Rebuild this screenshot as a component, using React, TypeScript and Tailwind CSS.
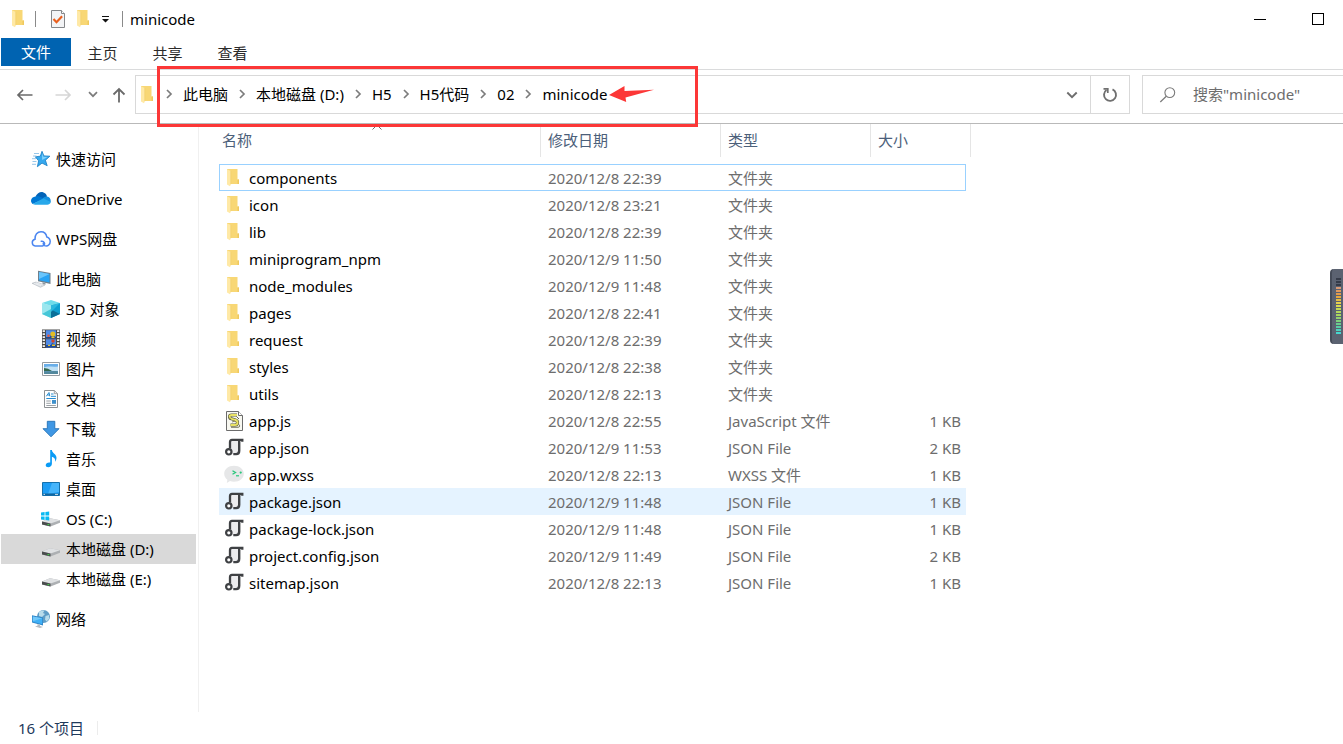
import type { ReactNode } from 'react';

function Icon({ children }: { children: ReactNode }) {
  return (
    <svg viewBox="0 0 20 20" className="h-5 w-5 shrink-0" aria-hidden="true">
      {children}
    </svg>
  );
}

function FolderIcon() {
  return (
    <Icon>
      <path d="M3 1h10.500v10.500H15V16H3z" fill="#f8d775" />
      <path d="M13.500 11.500H15V16h-1.500z" fill="#efc95f" />
      <path d="M3 1.200 6.800 3v13.200L6 18.200 3 16.600z" fill="#ffe9a6" />
      <path d="M6.800 3v13.200" stroke="#ecc965" strokeWidth=".6" />
    </Icon>
  );
}

function CheckDocIcon() {
  return (
    <Icon>
      <path d="M3.500 1.500h10l3 3v14h-13z" fill="#f3f4f6" stroke="#85878a" />
      <path d="M13.500 1.500v3h3" fill="#fff" stroke="#85878a" />
      <path d="m5.500 10 3 3.200 5.600-6" fill="none" stroke="#e9601f" strokeWidth="2.200" />
    </Icon>
  );
}

function StarIcon() {
  return (
    <Icon>
      <path d="M11 2.300l1.900 4.600 6 .3-4.500 4 1.800 5.500-5.200-2.600-4.600 3.600 1.200-5.900-3.300-4 5-.6z" fill="#35a8ee" stroke="#147bc2" strokeWidth=".8" />
      <path d="M11 4l1.300 3.700 4.400.3-5.600 3z" fill="#7dd0fb" />
      <path d="M3 4.500h5M2 7h3.500M1 9.700h4M1.500 12.500h4M1 15.300h4" stroke="#8bbfe6" strokeWidth=".9" />
    </Icon>
  );
}

function OneDriveIcon() {
  return (
    <Icon>
      <path d="M4.500 7.500C6 4.500 9.200 2.300 12 3.200c2.200.6 3.600 2.300 4 4.300L11 11z" fill="#0364b8" />
      <path d="M4.600 7.500C2 7.700 0 9.500 0 11.700c0 1.300.7 2.500 1.800 3.300L13.500 9.800 9 7.800C7.600 7.200 6 7.200 4.600 7.500z" fill="#0078d4" />
      <path d="M16 7.500c-1.800-.2-3.300.7-4.300 2L15 12l4.700 1.200c.5-2.700-1-5.400-3.700-5.700z" fill="#1490df" />
      <path d="M1.800 15c.7.500 1.600.7 2.500.7h12c1.600 0 3-1 3.500-2.500L12.500 9.300z" fill="#28a8ea" />
    </Icon>
  );
}

function WpsCloudIcon() {
  return (
    <Icon>
      <path
        d="M11.500 17H4.200A3.400 3.400 0 0 1 4 10.300C3.600 5.800 6.500 2.700 10 2.700c3.200 0 5.300 2.200 5.800 5.300 2 .6 3.400 2.300 3.400 4.500 0 2.600-2 4.500-4 4.500-2.800 0-3.500-2.200-2.500-3.700M11.500 17c1.700-.3 2.600-2 1.800-3.400-.6-1-1.700-1.600-3-1.300"
        fill="none"
        stroke="#4b86f0"
        strokeWidth="1.500"
        strokeLinecap="round"
      />
    </Icon>
  );
}

function ComputerIcon() {
  return (
    <Icon>
      <path d="M7 1.800 19.500 4v11L7 12.200z" fill="#6f7f8c" />
      <path d="M8 3l10.500 1.900v8.600L8 11.200z" fill="#29a3f4" />
      <path d="M8 3l10.500 1.900L8 10z" fill="#6ac5fb" />
      <path d="m11.500 13.200 3 .7v1.800l-3-.6z" fill="#8d98a1" />
      <path d="M1 14.300 5 13l9 3-4.500 2.300z" fill="#d7dce1" stroke="#a5adb5" strokeWidth=".5" />
      <path d="m3 14.400 7 2.400M5 13.800l7 2.200" stroke="#fff" strokeWidth=".5" />
    </Icon>
  );
}

function CubeIcon() {
  return (
    <Icon>
      <path d="M1 4l9-3 9 3-9 3z" fill="#6fdcea" />
      <path d="M1 4l9 2.500V19l-9-4z" fill="#9be7ef" />
      <path d="M1 15l9-5v9z" fill="#45c6d7" />
      <path d="M10 6.500 19 4v11l-9 4z" fill="#0e9fd0" />
      <path d="M10 10.500 19 15l-9 4z" fill="#0a6f98" />
      <path d="M10 6.500 19 4 10 13z" fill="#2bb7dd" />
    </Icon>
  );
}

function VideoIcon() {
  return (
    <Icon>
      <path d="M1 .5h18V19H1z" fill="#4b4b4b" />
      <path d="M5 1.300h10v7.900H5zM5 10.200h10v8.200H5z" fill="#4f8ae6" />
      <path d="M5 8h4l1-3 5 3v1.200H5zM5 16h5l1-2 4 2v2.400H5z" fill="#1e4899" />
      <circle cx="11.800" cy="5" r="2.500" fill="#e3bd23" />
      <circle cx="7.500" cy="6.700" r="1.300" fill="#e1593c" />
      <circle cx="12" cy="12" r="1.700" fill="#d0462f" />
      <path d="M10.500 7.500h3v1.400h-3zM7 15.800h2v1.300H7zM11 15.400h3v1.600h-3z" fill="#e8c32d" />
      <path d="M2.800 1.200v18M17.200 1.200v18" stroke="#f2f2f2" strokeWidth="2.300" strokeDasharray="1.700 1.300" />
    </Icon>
  );
}

function PictureIcon() {
  return (
    <Icon>
      <path d="M1.500 3.500h17v13h-17z" fill="#fff" stroke="#969ba0" />
      <path d="M3 5h14v10H3z" fill="#69aee9" />
      <path d="M3 8.500c4-2 8 0 14-1V12H3z" fill="#bfe0f5" />
      <path d="M3 9l4 .8 4 2.200H3z" fill="#35684f" />
      <path d="M3 12c4 .8 9-.8 14 .3V15H3z" fill="#53889d" />
    </Icon>
  );
}

function DocumentIcon() {
  return (
    <Icon>
      <path d="M3.500 1.500h10l3 3v14h-13z" fill="#fff" stroke="#8d9194" />
      <path d="M13.300 1.500v3.200h3.200" fill="#e8eaec" stroke="#8d9194" strokeWidth=".8" />
      <path d="M5.300 7.300 8 3.500l.8 3.800M6.500 6h2.200M10 5h2.500M10 7.300h5M5.300 9.500h9.500" fill="none" stroke="#258bd0" />
      <path d="M5.300 12h4.500M5.300 14.300h4.500M5.300 16.500h9.500" stroke="#9aa0a5" />
      <path d="M11 11h4v3.800h-4z" fill="#3f90cb" />
    </Icon>
  );
}

function DownloadIcon() {
  return (
    <Icon>
      <path d="M6.300 2.300h7.500v7.400H18L10 17.800 2 9.700h4.300z" fill="#3f97e4" stroke="#2472b6" strokeWidth=".9" />
    </Icon>
  );
}

function MusicIcon() {
  return (
    <Icon>
      <path d="M9.200 1h1.700c.2 3.300 4.600 4 4.600 7.800 0 1.700-.7 3-1.400 3.900.5-3-.7-4.300-3.200-5v7.100c0 2.200-1.800 3.500-3.700 3.500-1.500 0-2.500-.8-2.500-2 0-1.800 2.200-3.300 4.500-2.700z" fill="#0a9bf5" />
    </Icon>
  );
}

function DesktopIcon() {
  return (
    <Icon>
      <path d="M1.500 3.500h17v13h-17z" fill="#1e9df4" stroke="#1571ad" />
      <path d="M11 4h7v9L7 15z" fill="#47b5fb" />
      <path d="M2 14.500h16v1.700H2z" fill="#11649c" />
      <path d="M2.500 15.400h1.500M14 15.400h3" stroke="#fff" strokeWidth=".8" />
    </Icon>
  );
}

function DriveShape() {
  return (
    <>
      <path d="M1 12.500 9 9.300l10 2v2.400L9.500 17.500 1 15.500z" fill="#adb0b3" />
      <path d="M1 12.500 9 9.300l10 2-9.500 3.200z" fill="#dfe1e3" />
      <path d="m1 12.500 8.500 2v3L1 15.500z" fill="#4a4d4e" />
      <path d="M6.500 15h1.800v1.200H6.500z" fill="#44cf4d" />
    </>
  );
}

function DriveIcon() {
  return (
    <Icon>
      <DriveShape />
    </Icon>
  );
}

function SystemDriveIcon() {
  return (
    <Icon>
      <DriveShape />
      <path d="M0 3.500 3.600 3v3.600H0zM4.400 2.900 8.200 2.400v4.200H4.400zM0 7.400h3.600V11L0 10.500zM4.400 7.400h3.800v4.200l-3.800-.5z" fill="#08b9f2" />
    </Icon>
  );
}

function NetworkIcon() {
  return (
    <Icon>
      <circle cx="12.500" cy="7.500" r="6.500" fill="#5f9dc6" />
      <path d="M8 3c2-1.500 4-1.600 5.500-1.500L12 4l2 1-3 3-3-1zM14.500 7l3.500-1v4l-2.500 2.500-1.500-2z" fill="#b9dceb" />
      <path d="M1 6.300 12 8.500v8L1 13.500z" fill="#3086c8" />
      <path d="M1.800 7.400 11.200 9.300v6l-9.400-2.500z" fill="#3fb0f6" />
      <path d="m1.800 7.400 9.400 1.900-9.400 3z" fill="#73c9fa" />
      <path d="m6.500 15 2.500.7v1.400l3 .8-3 1-5-1.300 2.500-.8z" fill="#b6bdc3" />
    </Icon>
  );
}

function ScriptIcon() {
  return (
    <Icon>
      <path d="M2.500.5h12l4 4v15h-16z" fill="#f8f8f1" stroke="#6c6c6c" />
      <path d="M14.500.5v4h4" fill="#fff" stroke="#6c6c6c" />
      <path d="M13 4H7.500C5 4 5 7.300 7.500 7.800l4 1.200c3 .9 2.500 5-.5 5H6.500" fill="none" stroke="#57573a" strokeWidth="3.200" />
      <path d="M13 4H7.500C5 4 5 7.300 7.500 7.800l4 1.200c3 .9 2.500 5-.5 5H6.500" fill="none" stroke="#e9e265" strokeWidth="1.900" />
      <path d="M12.500 5.500 15 8M7 16.200h7.500c1.200 0 1.500-1.700.5-2.700" fill="none" stroke="#57573a" strokeWidth=".9" />
      <path d="M5 6.500 7 9M8 11l3-1" stroke="#57573a" strokeWidth=".7" />
    </Icon>
  );
}

function JsonIcon() {
  return (
    <Icon>
      <path d="M6.500 2h9v11.500c0 2-1 3-3 3H9L6.500 11z" fill="#ececee" />
      <path d="M18.300 3.800V1.800H8C6.500 1.800 6 2.700 6 4.200v6.300" fill="none" stroke="#3f4144" strokeWidth="2.300" />
      <path d="M15.200 2v10.800c0 2.300-1 3.300-3 3.300H9.300" fill="none" stroke="#3f4144" strokeWidth="2.400" />
      <circle cx="4.800" cy="13.800" r="2.700" fill="#fff" stroke="#3f4144" strokeWidth="2.200" />
    </Icon>
  );
}

function WxssIcon() {
  return (
    <Icon>
      <path d="M10 .8c5.500 0 9.800 3.500 9.800 8s-4.300 8-9.800 8c-1.500 0-2.800-.2-4-.7L2.800 18l.6-3.200C1.300 13.300.2 11.200.2 8.800.2 4.300 4.500.8 10 .8z" fill="#e6e7e8" />
      <path d="m8.500 5.800 3 1.700-3 1.700" fill="none" stroke="#2ac77b" strokeWidth="1.300" />
      <path d="M12 10.800h3" stroke="#2ac77b" strokeWidth="1.200" />
      <circle cx="16.700" cy="7.600" r="1.100" fill="#2ac77b" />
    </Icon>
  );
}

function Chevron() {
  return (
    <svg viewBox="0 0 8 10" className="h-[10px] w-2 shrink-0" aria-hidden="true">
      <path d="m2 1 4 4-4 4" fill="none" stroke="#7c7c7c" strokeWidth="1.700" />
    </svg>
  );
}

function DownChevron() {
  return (
    <svg viewBox="0 0 12 8" className="h-2 w-3" aria-hidden="true">
      <path d="m1.300 1.500 4.700 4.700 4.700-4.700" fill="none" stroke="#6e6e6e" strokeWidth="1.900" />
    </svg>
  );
}

type Place = { label: string; icon: ReactNode; active?: boolean };

const drives: Place[] = [
  { label: '3D 对象', icon: <CubeIcon /> },
  { label: '视频', icon: <VideoIcon /> },
  { label: '图片', icon: <PictureIcon /> },
  { label: '文档', icon: <DocumentIcon /> },
  { label: '下载', icon: <DownloadIcon /> },
  { label: '音乐', icon: <MusicIcon /> },
  { label: '桌面', icon: <DesktopIcon /> },
  { label: 'OS (C:)', icon: <SystemDriveIcon /> },
  { label: '本地磁盘 (D:)', icon: <DriveIcon />, active: true },
  { label: '本地磁盘 (E:)', icon: <DriveIcon /> },
];

const places: (Place & { children?: Place[] })[] = [
  { label: '快速访问', icon: <StarIcon /> },
  { label: 'OneDrive', icon: <OneDriveIcon /> },
  { label: 'WPS网盘', icon: <WpsCloudIcon /> },
  { label: '此电脑', icon: <ComputerIcon />, children: drives },
  { label: '网络', icon: <NetworkIcon /> },
];

type FileRow = {
  name: string;
  date: string;
  type: string;
  size?: string;
  icon: ReactNode;
  state?: 'focused' | 'hovered';
};

const folder = (name: string, date: string): FileRow => ({ name, date, type: '文件夹', icon: <FolderIcon /> });
const json = (name: string, date: string, size: string): FileRow => ({
  name,
  date,
  size,
  type: 'JSON File',
  icon: <JsonIcon />,
});

const files: FileRow[] = [
  { ...folder('components', '2020/12/8 22:39'), state: 'focused' },
  folder('icon', '2020/12/8 23:21'),
  folder('lib', '2020/12/8 22:39'),
  folder('miniprogram_npm', '2020/12/9 11:50'),
  folder('node_modules', '2020/12/9 11:48'),
  folder('pages', '2020/12/8 22:41'),
  folder('request', '2020/12/8 22:39'),
  folder('styles', '2020/12/8 22:38'),
  folder('utils', '2020/12/8 22:13'),
  { name: 'app.js', date: '2020/12/8 22:55', type: 'JavaScript 文件', size: '1 KB', icon: <ScriptIcon /> },
  json('app.json', '2020/12/9 11:53', '2 KB'),
  { name: 'app.wxss', date: '2020/12/8 22:13', type: 'WXSS 文件', size: '1 KB', icon: <WxssIcon /> },
  { ...json('package.json', '2020/12/9 11:48', '1 KB'), state: 'hovered' },
  json('package-lock.json', '2020/12/9 11:48', '1 KB'),
  json('project.config.json', '2020/12/9 11:49', '2 KB'),
  json('sitemap.json', '2020/12/8 22:13', '1 KB'),
];

const crumbs = ['此电脑', '本地磁盘 (D:)', 'H5', 'H5代码', '02', 'minicode'];

const meterColors = [
  '#353b49', '#353b49', '#353b49', '#d99a75', '#df9a5e', '#e39a4a', '#e6a93f', '#e6bd45', '#e5cf4c', '#d9da4f',
  '#c3da55', '#b5d85a', '#a9d65f', '#93d36c', '#7dd07c', '#68ce8f', '#58cfa4', '#4dd2bb', '#45d6cf',
];

function TitleBar() {
  return (
    <header className="flex h-[38px] items-center">
      <div className="flex items-center pl-[9px]">
        <FolderIcon />
        <span className="ml-1.5 h-4 w-px bg-[#8a8a8a]" />
        <button type="button" aria-label="属性" className="ml-3">
          <CheckDocIcon />
        </button>
        <button type="button" aria-label="新建文件夹" className="ml-1.5">
          <FolderIcon />
        </button>
        <button type="button" aria-label="自定义快速访问工具栏" className="ml-2">
          <svg viewBox="0 0 7 7" className="h-[7px] w-[7px]" aria-hidden="true">
            <path d="M0 0h7v1H0zM0 3h7L3.500 6.500z" fill="#111" />
          </svg>
        </button>
        <span className="ml-[13px] h-4 w-px bg-[#8a8a8a]" />
      </div>
      <h1 className="pl-[7px] text-black">minicode</h1>
      <div className="ml-auto flex h-full">
        <button type="button" aria-label="最小化" className="flex w-[66px] items-center justify-center">
          <span className="h-px w-3 bg-black" />
        </button>
        <button type="button" aria-label="最大化" className="flex w-[50px] items-center justify-center">
          <span className="h-3 w-3 border border-black" />
        </button>
      </div>
    </header>
  );
}

function RibbonTabs() {
  return (
    <nav className="flex h-8 items-start border-b border-[#dadbdc] pl-px">
      <button type="button" className="h-7 w-[70px] bg-[#0063b1] text-white">
        文件
      </button>
      {['主页', '共享', '查看'].map((tab) => (
        <button key={tab} type="button" className="h-[30px] w-[65px] pr-0.5 text-[#2b2b2b]">
          {tab}
        </button>
      ))}
    </nav>
  );
}

function AddressRow() {
  return (
    <div className="relative flex h-[54px] items-start border-b border-[#b9b9b9] pt-[5px]">
      <div className="flex h-[39px] w-[135px] shrink-0 items-center pl-4">
        <button type="button" aria-label="后退">
          <svg viewBox="0 0 18 14" className="h-[14px] w-[18px]" aria-hidden="true">
            <path d="M16.500 7H2M7 2 2 7l5 5" fill="none" stroke="#6a6a6a" strokeWidth="1.700" />
          </svg>
        </button>
        <button type="button" aria-label="前进" className="ml-5">
          <svg viewBox="0 0 18 14" className="h-[14px] w-[18px]" aria-hidden="true">
            <path d="M1.500 7H16M11 2l5 5-5 5" fill="none" stroke="#d6d6d6" strokeWidth="1.700" />
          </svg>
        </button>
        <button type="button" aria-label="最近的位置" className="ml-4">
          <svg viewBox="0 0 10 7" className="h-[7px] w-[10px]" aria-hidden="true">
            <path d="m1 1.200 4 4 4-4" fill="none" stroke="#7c7c7c" strokeWidth="1.700" />
          </svg>
        </button>
        <button type="button" aria-label="上移" className="ml-3.5">
          <svg viewBox="0 0 14 16" className="h-4 w-[14px]" aria-hidden="true">
            <path d="M7 15.500V2M1.500 7.500 7 2l5.500 5.500" fill="none" stroke="#6a6a6a" strokeWidth="1.800" />
          </svg>
        </button>
      </div>
      <div className="flex h-[39px] min-w-0 flex-1 items-center border border-[#d9d9d9]">
        <div className="pl-0.5">
          <FolderIcon />
        </div>
        <nav className="flex min-w-0 flex-1 items-center gap-[10px] pb-0.5 pl-[7px] whitespace-nowrap text-black">
          {crumbs.map((crumb) => (
            <span key={crumb} className="flex items-center gap-[10px]">
              <Chevron />
              <a href="#">{crumb}</a>
            </span>
          ))}
          <svg viewBox="0 0 46 16" className="-ml-2 h-4 w-[46px] shrink-0" aria-hidden="true">
            <path d="M0 9 15.500 0v5l29.500-1.200L16.500 11.500l.7 4.500z" fill="#fc3737" />
          </svg>
        </nav>
        <button type="button" aria-label="以前的位置" className="flex h-full w-9 items-center justify-center">
          <DownChevron />
        </button>
        <button
          type="button"
          aria-label="刷新"
          className="flex h-full w-[39px] items-center justify-center border-l border-[#d9d9d9]"
        >
          <svg viewBox="0 0 16 16" className="h-4 w-4" aria-hidden="true">
            <path d="M10.500 2.400a6 6 0 1 1-6 .6" fill="none" stroke="#707070" strokeWidth="1.900" />
            <path d="M1.500 1.800h4.300V6" fill="none" stroke="#707070" strokeWidth="1.700" />
          </svg>
        </button>
      </div>
      <label className="ml-3 flex h-[39px] w-[201px] shrink-0 items-center border border-r-0 border-[#d9d9d9] pl-4">
        <svg viewBox="0 0 18 18" className="h-[18px] w-[18px] shrink-0" aria-hidden="true">
          <circle cx="10.800" cy="6.600" r="4.900" fill="none" stroke="#7a7a7a" strokeWidth="1.100" />
          <path d="M7.300 10.200 1.300 16" stroke="#7a7a7a" strokeWidth="1.200" />
        </svg>
        <input
          type="text"
          aria-label="搜索"
          placeholder={'搜索"minicode"'}
          className="ml-4 min-w-0 flex-1 bg-transparent pb-0.5 outline-none placeholder:text-[#6d6d6d]"
        />
      </label>
      <div className="pointer-events-none absolute -top-1 left-[157px] z-10 h-[61px] w-[541px] border-[3px] border-[#fc3737]" />
    </div>
  );
}

function PlaceLink({ place, nested }: { place: Place; nested?: boolean }) {
  return (
    <a
      href="#"
      className={`flex h-[30px] items-center gap-[5px] text-black ${nested ? 'pl-10' : 'pl-[30px]'} ${
        place.active ? 'bg-[#d9d9d9]' : ''
      }`}
    >
      {place.icon}
      {place.label}
    </a>
  );
}

function Sidebar() {
  return (
    <aside className="w-[199px] shrink-0 border-r border-[#f0f0f0] pt-5 pr-0.5 pl-px">
      <ul className="flex flex-col gap-[10px]">
        {places.map((place) => (
          <li key={place.label}>
            <PlaceLink place={place} />
            {place.children && (
              <ul>
                {place.children.map((child) => (
                  <li key={child.label}>
                    <PlaceLink place={child} nested />
                  </li>
                ))}
              </ul>
            )}
          </li>
        ))}
      </ul>
    </aside>
  );
}

const rowStyles = {
  normal: 'border-transparent pl-[7px] first:pl-[5px]',
  focused: 'border-[#99d1ff] pl-[7px] first:border-l first:pl-1 last:border-r',
  hovered: 'border-[#e5f3ff] bg-[#e5f3ff] pl-[7px] first:pl-[5px]',
};

function FileTable() {
  return (
    <table className="w-[752px] table-fixed border-separate border-spacing-0 text-left">
      <colgroup>
        <col className="w-[322px]" />
        <col className="w-[180px]" />
        <col className="w-[150px]" />
        <col className="w-[95px]" />
        <col className="w-[5px]" />
      </colgroup>
      <thead>
        <tr>
          {['名称', '修改日期', '类型', '大小'].map((title, i) => (
            <th key={title} scope="col" colSpan={i === 3 ? 2 : 1} className="p-0 pb-[7px] font-normal text-[#4c607a]">
              <div
                className={`relative flex h-[33px] items-center border-r border-[#e5e5e5] pb-0.5 ${
                  i === 0 ? 'pl-[3px]' : 'pl-[7px]'
                }`}
              >
                {title}
                {i === 0 && (
                  <svg
                    viewBox="0 0 10 6"
                    className="absolute top-0 left-1/2 h-1.5 w-[10px] -translate-x-2"
                    aria-hidden="true"
                  >
                    <path d="m.5 5.500 4.500-4.500 4.500 4.500" fill="none" stroke="#6b6b6b" />
                  </svg>
                )}
              </div>
            </th>
          ))}
        </tr>
      </thead>
      <tbody className="text-[#6d6d6d]">
        {files.map((file) => {
          const cell = `h-[27px] border-y py-0 ${rowStyles[file.state ?? 'normal']}`;
          return (
            <tr key={file.name}>
              <td className={`${cell} pr-0 text-black`}>
                <div className="flex items-center gap-[5px]">
                  {file.icon}
                  {file.name}
                </div>
              </td>
              <td className={`${cell} pr-0`}>{file.date}</td>
              <td className={`${cell} pr-0`}>{file.type}</td>
              <td className={`${cell} pr-[5px] text-right`}>{file.size}</td>
            </tr>
          );
        })}
      </tbody>
    </table>
  );
}

function LevelMeter() {
  return (
    <div className="absolute top-[145px] right-0 flex h-[75px] w-[13px] flex-col items-end gap-px rounded-l border-l-2 border-[#454b58] bg-[#5b6271] pt-[9px] pr-0.5">
      {meterColors.map((color, i) => (
        <span key={i} className="h-0.5 w-[5px]" style={{ backgroundColor: color }} />
      ))}
    </div>
  );
}

export default function App() {
  return (
    <div className="flex min-h-screen flex-col bg-white font-['Noto_Sans','Noto_Sans_CJK_SC',sans-serif] text-[15px] leading-5">
      <TitleBar />
      <RibbonTabs />
      <AddressRow />
      <main className="relative flex flex-1">
        <Sidebar />
        <section className="min-w-0 flex-1 pl-5">
          <FileTable />
        </section>
        <LevelMeter />
      </main>
      <footer className="flex h-8 items-center pl-[18px] text-[#1e395b]">
        16 个项目
        <span className="ml-[13px] h-[14px] w-px bg-[#ececec]" />
      </footer>
    </div>
  );
}
